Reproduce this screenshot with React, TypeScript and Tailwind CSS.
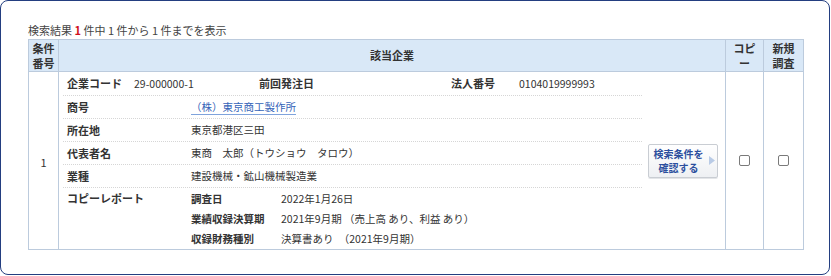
import React from "react";

const FONT = { fontFamily: '"Noto Sans CJK JP", "Noto Sans", sans-serif' };

function InfoRow({ label, children, last }: { label: string; children: React.ReactNode; last?: boolean }) {
  return (
    <div
      className={`flex h-[23px] items-center ${last ? "" : "border-b border-dotted border-[#d6d6d6]"}`}
    >
      <div className="w-[128px] pl-[4px] text-[11px] font-bold text-[#333]">{label}</div>
      <div className="text-[10.5px] text-[#333]">{children}</div>
    </div>
  );
}

function ConfirmButton() {
  return (
    <button className="flex h-[34px] w-[70px] items-center justify-center rounded-[2px] border border-[#c9cdd3] bg-gradient-to-b from-white to-[#eef0f3] pl-[2px] shadow-[0_1px_0_#e3e5e8]">
      <span className="text-center text-[10px] font-bold leading-[14px] text-[#2c4f9e]">
        検索条件を
        <br />
        確認する
      </span>
      <svg width="6" height="9" viewBox="0 0 6 9" className="ml-[5px]">
        <path d="M0 0 L6 4.5 L0 9 Z" fill="#b9cbe6" />
      </svg>
    </button>
  );
}

function Checkbox() {
  return <div className="mx-auto h-[11px] w-[11px] rounded-[2px] border border-[#7a7a7a] bg-white" />;
}

export default function App() {
  return (
    <div style={FONT} className="h-[276px] w-[831px] bg-white">
      <div className="h-[275px] w-[830px] rounded-[8px] border border-[#233e80] px-[27px] pt-[22px]">
        <div className="mb-[1px] text-[11px] leading-[15px] text-[#444]">
          検索結果 <span className="font-bold text-[#d0101b]">1</span> 件中 1 件から 1 件までを表示
        </div>
        <table className="w-[776px] border-collapse border border-[#bccbdd] text-[#333]">
          <thead>
            <tr className="h-[32px] bg-[#d9e8f7]">
              <th className="w-[30px] border border-[#bccbdd] text-[11px] font-bold leading-[15px]">
                条件
                <br />
                番号
              </th>
              <th className="border border-[#bccbdd] text-[11px] font-bold">該当企業</th>
              <th className="w-[38px] border border-[#bccbdd] text-[11px] font-bold leading-[15px]">
                コピ
                <br />ー
              </th>
              <th className="w-[40px] border border-[#bccbdd] text-[11px] font-bold leading-[15px]">
                新規
                <br />
                調査
              </th>
            </tr>
          </thead>
          <tbody>
            <tr>
              <td className="border border-[#bccbdd] text-center text-[11px] pt-[4px]">1</td>
              <td className="border border-[#bccbdd] px-[4px]">
                <div className="flex items-center">
                  <div className="w-[579px]">
                    <div className="flex h-[24px] items-center border-b border-dotted border-[#d6d6d6]">
                      <div className="w-[71px] pl-[4px] text-[11px] font-bold">企業コード</div>
                      <div className="w-[125px] text-[10.5px]">29-000000-1</div>
                      <div className="w-[192px] text-[11px] font-bold">前回発注日</div>
                      <div className="w-[68px] text-[11px] font-bold">法人番号</div>
                      <div className="text-[10.5px]">0104019999993</div>
                    </div>
                    <InfoRow label="商号">
                      <span className="border-b border-[#7fa3dc] text-[#3564b8]">（株）東京商工製作所</span>
                    </InfoRow>
                    <InfoRow label="所在地">東京都港区三田</InfoRow>
                    <InfoRow label="代表者名">東商　太郎（トウショウ　タロウ）</InfoRow>
                    <InfoRow label="業種">建設機械・鉱山機械製造業</InfoRow>
                    <div className="flex h-[61px] pt-[1px]">
                      <div className="w-[128px] pl-[4px] text-[11px] font-bold leading-[19px]">コピーレポート</div>
                      <div className="grid grid-cols-[90px_1fr] text-[10.5px] leading-[19px]">
                        <div className="font-bold">調査日</div>
                        <div>2022年1月26日</div>
                        <div className="font-bold">業績収録決算期</div>
                        <div>2021年9月期 （売上高 あり、利益 あり）</div>
                        <div className="font-bold">収録財務種別</div>
                        <div>決算書あり　（2021年9月期）</div>
                      </div>
                    </div>
                  </div>
                  <div className="ml-[6px]">
                    <ConfirmButton />
                  </div>
                </div>
              </td>
              <td className="border border-[#bccbdd]">
                <Checkbox />
              </td>
              <td className="border border-[#bccbdd]">
                <Checkbox />
              </td>
            </tr>
          </tbody>
        </table>
      </div>
    </div>
  );
}
